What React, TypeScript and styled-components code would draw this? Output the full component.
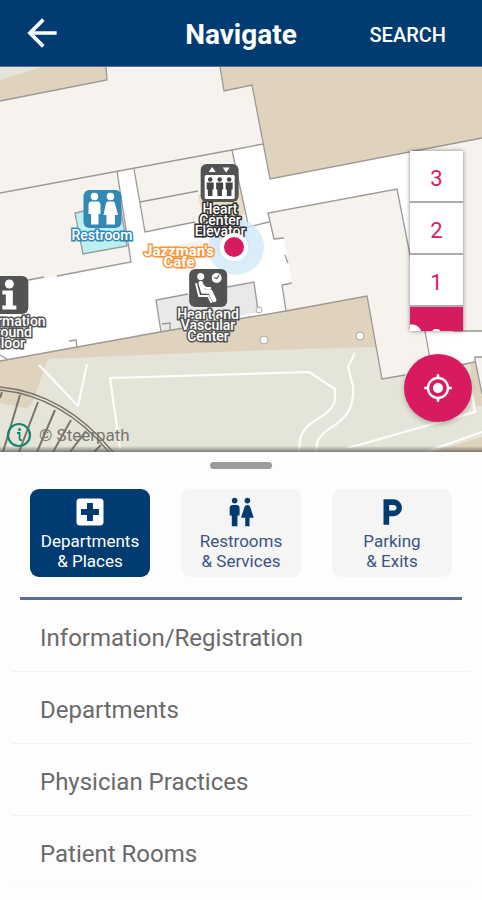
import React from "react";
import styled, { createGlobalStyle } from "styled-components";
import {
  MdArrowBack,
  MdLocalHospital,
  MdLocalParking,
  MdMyLocation,
  MdWc,
} from "react-icons/md";

const color = {
  navy: "#003c71",
  slate: "#5f6c91",
  pink: "#d81b60",
  tan: "#dfd3bd",
  room: "#f6f3ef",
  grass: "#e5e4d8",
  wall: "#9b9896",
  pin: "#535353",
  water: "#3389b5",
};

const GlobalStyle = createGlobalStyle`
  *, *::before, *::after { box-sizing: border-box; }
  body { margin: 0; background: #fdfdfd; font-family: Roboto, "Liberation Sans", sans-serif; }
  button { font: inherit; border: 0; padding: 0; background: none; cursor: pointer; }
`;

const Screen = styled.div`
  display: flex;
  flex-direction: column;
  min-height: 100vh;
  overflow: hidden;
`;

const Header = styled.header`
  display: grid;
  grid-template-columns: 1fr auto 1fr;
  align-items: center;
  height: 67px;
  padding: 0 36px 0 20px;
  background: ${color.navy};
  border-bottom: 1px solid ${color.slate};
  color: #fff;
`;

const BackButton = styled.button`
  display: flex;
  justify-self: start;
  color: #fff;
`;

const Title = styled.h1`
  margin: 0 0 0 16px;
  padding-top: 4px;
  font-size: 28px;
  line-height: 32px;
  font-weight: 700;
`;

const SearchButton = styled.button`
  && {
    justify-self: end;
    padding-top: 4px;
    color: #fff;
    font-size: 20px;
    line-height: 24px;
    font-weight: 500;
  }
`;

const MapArea = styled.section`
  position: relative;
  height: 385px;
  overflow: hidden;
  background: #fff;
`;

const Plan = styled.svg`
  display: block;
  width: 100%;
  height: 100%;
`;

const MapShade = styled.div`
  position: absolute;
  inset: auto 0 0 0;
  height: 6px;
  background: linear-gradient(rgba(90, 88, 80, 0), rgba(90, 88, 80, 0.75));
`;

const Pin = styled.div<{ $x: number; $y: number }>`
  position: absolute;
  left: calc(50% + ${(p) => p.$x}px);
  top: ${(p) => p.$y}px;
  display: flex;
  flex-direction: column;
  align-items: center;
  transform: translateX(-50%);
`;

const PinIcon = styled.svg`
  display: block;
  width: 40px;
  height: 40px;
`;

const PinLabel = styled.span<{ $outline: string; $large?: boolean }>`
  padding-top: 1px;
  color: #fff;
  font-size: ${(p) => (p.$large ? 15 : 14)}px;
  line-height: 11px;
  font-weight: ${(p) => (p.$large ? 700 : 500)};
  text-align: center;
  white-space: pre;
  -webkit-text-stroke: 3px ${(p) => p.$outline};
  paint-order: stroke fill;
`;

const Attribution = styled.div`
  position: absolute;
  left: 6px;
  bottom: 4px;
  display: flex;
  align-items: center;
  gap: 7px;
  color: #77766f;
  font-size: 17px;
  line-height: 26px;
`;

const InfoButton = styled.button`
  display: flex;
`;

const Floors = styled.div`
  position: absolute;
  top: 84px;
  right: 19px;
  width: 53px;
  height: 180px;
  overflow: hidden;
  background: #fff;
  box-shadow: 0 0 4px rgba(0, 0, 0, 0.5);
`;

const FloorButton = styled.button<{ $active?: boolean }>`
  && {
    display: block;
    width: 100%;
    height: 52px;
    border-bottom: 2px solid #aaa;
    padding-top: ${(p) => (p.$active ? 12 : 6)}px;
    background: ${(p) =>
      p.$active
        ? `radial-gradient(circle at 2px 27px, #fff 9px, ${color.pink} 10px)`
        : "#fff"};
    color: ${(p) => (p.$active ? "#fff" : color.pink)};
    font-size: 22px;
    line-height: 24px;
  }
`;

const LocateButton = styled.button`
  && {
    position: absolute;
    right: 10px;
    bottom: 30px;
    display: flex;
    align-items: center;
    justify-content: center;
    width: 68px;
    height: 68px;
    border-radius: 50%;
    background: ${color.pink};
    box-shadow: 0 2px 5px rgba(0, 0, 0, 0.25);
    color: #fff;
    font-size: 30px;
  }
`;

const Sheet = styled.main`
  display: flex;
  flex: 1;
  flex-direction: column;
  padding-top: 10px;
`;

const Handle = styled.div`
  align-self: center;
  width: 62px;
  height: 7px;
  border-radius: 4px;
  background: #9b9b9b;
`;

const Tabs = styled.div`
  display: grid;
  grid-template-columns: repeat(3, 1fr);
  gap: 31px;
  padding: 20px 30px;
`;

const Tab = styled.button<{ $active?: boolean }>`
  && {
    display: flex;
    flex-direction: column;
    align-items: center;
    height: 88px;
    padding-top: 5px;
    border-radius: 9px;
    background: ${(p) => (p.$active ? color.navy : "#f5f5f5")};
    color: ${(p) => (p.$active ? "#fff" : "#3b5484")};
    font-size: 17px;
    line-height: 20px;
    white-space: pre;
  }
`;

const TabIcon = styled.span<{ $active?: boolean }>`
  display: flex;
  align-items: center;
  height: 36px;
  margin-bottom: 1px;
  color: ${(p) => (p.$active ? "#fff" : color.navy)};
`;

const Rule = styled.hr`
  align-self: stretch;
  height: 3px;
  margin: 0 20px;
  border: 0;
  background: ${color.slate};
`;

const List = styled.ul`
  margin: 0;
  padding: 0 12px;
  list-style: none;
`;

const Row = styled.li`
  border-bottom: 1px solid #f2f2f2;

  &:last-child {
    border-color: #f9f9f9;
  }
`;

const RowButton = styled.button`
  && {
    width: 100%;
    height: 71px;
    padding: 4px 28px 0;
    color: #6a6a6a;
    font-size: 24px;
    line-height: 28px;
    text-align: left;
  }
`;

const FloorPlan = () => (
  <Plan viewBox="0 67 482 385" preserveAspectRatio="xMidYMid slice" aria-hidden="true">
    <rect x="0" y="67" width="482" height="385" fill="#fff" />
    <path d="M0 67H224V91L252 85L263 144L232 150L0 193Z" fill={color.room} />
    <path d="M0 193L117 171L131 262L0 287Z" fill={color.room} />
    <path d="M0 60H106L107 80L0 101Z" fill={color.tan} />
    <path d="M0 60H64L0 80Z" fill={color.grass} />
    <path d="M219 60H482V138L270 179L252 85L224 91Z" fill={color.tan} />
    <path d="M134 169L232 151L246 210L195 222L145 232Z" fill={color.room} />
    <path d="M198 195L240 187L245 215L204 223Z" fill="#e9dcc3" />
    <path d="M204 223L245 216L250 250L218 254Z" fill="#ecebea" />
    <path d="M160 248L202 240L206 256L165 260Z" fill={color.room} />
    <path d="M75 213L120 204L127 246L83 254Z" fill="#bceff0" />
    <path
      d="M268 213L397 189L410 256V174L416 151L482 138V331H425L430 368L405 375L382 379L367 296L286 311L282 285L292 283L284 238L274 239Z"
      fill={color.room}
    />
    <path d="M0 361L160 332L286 311L367 296L382 379L462 364L482 360V452H0Z" fill={color.grass} />
    <path d="M0 361L160 332L286 311L367 296L376 347L240 351L48 359L35 395Q32 408 25 408L0 403Z" fill={color.tan} />
    <path d="M425 331H482V357H475V362L430 368Z" fill="#fff" />
    <path d="M470 364L475 361L482 394V406H476Z" fill={color.tan} />
    <path d="M475 357H482V392Z" fill={color.room} />
    <path d="M432 452L482 437V452Z" fill={color.tan} />
    <path d="M156 300L254 282L259 312L161 332Z" fill="#e9e9e9" />

    <g fill="none" stroke={color.wall} strokeWidth="1.3">
      <path d="M106 67L107 80L0 101M220 67L224 91L252 85L270 179L482 138M263 144L232 150L0 193" />
      <path d="M117 171L131 262L57 276M44 277L28 280M134 169L145 232L195 222M140 202L198 191M232 150L248 224" />
      <path d="M120 204L127 246L83 254L75 213L84 211M240 229L269 222" />
      <path d="M284 238L274 239L268 213L397 189L411 260M285 255L288 263M292 283L282 285L286 311" />
      <path d="M0 361L160 332L286 311L367 296L382 379L405 375M425 331L430 359M453 331H482M460 365L475 362V357H482M475 360L482 394" />
      <path d="M161 332L156 300L188 294M227 287L254 282L258 311M69 341L76 340L77 348M162 324L170 323V330M0 355L7 359" />
    </g>

    <g fill="none" stroke="#fdfdfb" strokeWidth="2.2" strokeLinejoin="round">
      <path d="M39 365L78 406L87 364M120 449L110 378L309 372L335 389V400C330 420 304 418 300 440L299 452" />
      <path d="M355 353L348 367L353 386C356 427 322 424 317 443L316 452M348 448L475 412L472 394M425 452L482 432" />
    </g>

    <g fill="#f7f7f5" stroke="#b0aba0">
      <circle cx="264" cy="340" r="4" />
      <circle cx="360" cy="336" r="4" />
      <circle cx="259" cy="310" r="3" />
    </g>

    <g fill="none" stroke="#77746e" strokeWidth="1.3">
      <path d="M0 387Q64 393 113 452M0 390Q62 396 109 452" />
      <path
        d="M0 398L2 392M20 395L3 452M38 402L19 452M55 410L37 452M71 420L53 452M86 431L70 452M101 445L94 452"
        strokeWidth="2"
      />
    </g>

    <circle cx="236" cy="247" r="28" fill="#cfeaf6" fillOpacity="0.8" />
  </Plan>
);

const Position = styled.div`
  position: absolute;
  left: calc(50% - 21px);
  top: 166px;
  width: 28px;
  height: 28px;
  border: 4px solid #fff;
  border-radius: 50%;
  background: ${color.pink};
`;

const RestroomPin = () => (
  <PinIcon viewBox="0 0 40 40">
    <rect x="1" y="1" width="38" height="38" rx="6" fill={color.water} />
    <g fill="#fff">
      <circle cx="12" cy="7.500" r="3.800" />
      <path d="M9 12.500H15Q18 12.500 18 16V25H16V35.500H8.500V25H6V16Q6 12.500 9 12.500Z" />
      <circle cx="28" cy="7.500" r="3.800" />
      <path d="M25.500 12.500H30.500Q32 12.500 32.500 14.500L35.500 26H32.500V35.500H24V26H21L23.500 14.500Q24 12.500 25.500 12.500Z" />
    </g>
  </PinIcon>
);

const rider = (x: number) => (
  <g key={x} transform={`translate(${x} 0)`}>
    <circle cx="0" cy="16.500" r="2.300" />
    <path d="M-3.500 19.500H3.500V26.500H2.300V33H-2.300V26.500H-3.500Z" />
  </g>
);

const ElevatorPin = () => (
  <PinIcon viewBox="0 0 40 40">
    <rect x="1" y="1" width="38" height="38" rx="6" fill={color.pin} />
    <path d="M9 9L12.500 4L16 9ZM23 4.500H30L26.500 9.500Z" fill="#fff" />
    <rect x="5" y="12" width="30" height="24" rx="1.500" fill="#fff" />
    <g fill="#444">{[10.5, 20, 29.5].map(rider)}</g>
  </PinIcon>
);

const WaitingPin = () => (
  <PinIcon viewBox="0 0 40 40">
    <rect x="1" y="1" width="38" height="38" rx="6" fill={color.pin} />
    <circle cx="12.500" cy="8.500" r="3.500" fill="#fff" />
    <path d="M12.500 15L15 23.500H22L26 32" fill="none" stroke="#fff" strokeWidth="4.500" strokeLinecap="round" strokeLinejoin="round" />
    <path d="M8 16L11 28H20L23 34M14 17L18 20H22" fill="none" stroke="#fff" strokeWidth="2" strokeLinecap="round" />
    <circle cx="28.500" cy="10" r="5" fill="#fff" />
    <path d="M31 7L28.500 10.500L26 9.500" fill="none" stroke={color.pin} strokeWidth="1.200" />
  </PinIcon>
);

const InformationPin = () => (
  <PinIcon viewBox="0 0 40 40">
    <rect x="1" y="1" width="38" height="38" rx="6" fill={color.pin} />
    <circle cx="20" cy="9" r="4.500" fill="#fff" />
    <path d="M13 15.500H23.500V30.500H27V34.500H13V30.500H16.500V19.500H13Z" fill="#fff" />
  </PinIcon>
);

const tabs = [
  { label: "Departments\n& Places", icon: <MdLocalHospital size={36} />, active: true },
  { label: "Restrooms\n& Services", icon: <MdWc size={34} /> },
  { label: "Parking\n& Exits", icon: <MdLocalParking size={34} /> },
];

const places = [
  "Information/Registration",
  "Departments",
  "Physician Practices",
  "Patient Rooms",
];

export default function App() {
  return (
    <Screen>
      <GlobalStyle />
      <Header>
        <BackButton aria-label="Back">
          <MdArrowBack size={44} />
        </BackButton>
        <Title>Navigate</Title>
        <SearchButton>SEARCH</SearchButton>
      </Header>

      <MapArea aria-label="Floor map">
        <FloorPlan />
        <Pin $x={-139} $y={122}>
          <RestroomPin />
          <PinLabel $outline={color.water}>Restroom</PinLabel>
        </Pin>
        <Pin $x={-21} $y={96}>
          <ElevatorPin />
          <PinLabel $outline="#2e2e2e">{"Heart\nCenter\nElevator"}</PinLabel>
        </Pin>
        <Pin $x={-62} $y={178}>
          <PinLabel $outline="#f5963c" $large>{"Jazzman's\nCafe"}</PinLabel>
        </Pin>
        <Pin $x={-33} $y={201}>
          <WaitingPin />
          <PinLabel $outline={color.pin}>{"Heart and\nVascular\nCenter"}</PinLabel>
        </Pin>
        <Pin $x={-232} $y={208}>
          <InformationPin />
          <PinLabel $outline={color.pin}>{"Information\nGround\nFloor"}</PinLabel>
        </Pin>
        <Position />
        <MapShade />
        <Attribution>
          <InfoButton aria-label="Map information">
            <svg width="26" height="26" viewBox="0 0 26 26">
              <circle cx="13" cy="13" r="11" fill="none" stroke="#16866f" strokeWidth="2.200" />
              <circle cx="13.500" cy="7.500" r="1.500" fill="#16866f" />
              <path d="M11 11H13.500V16.500Q13.500 18.500 16 18" fill="none" stroke="#16866f" strokeWidth="1.800" />
            </svg>
          </InfoButton>
          <span>© Steerpath</span>
        </Attribution>
        <Floors>
          <FloorButton>3</FloorButton>
          <FloorButton>2</FloorButton>
          <FloorButton>1</FloorButton>
          <FloorButton $active>0</FloorButton>
        </Floors>
        <LocateButton aria-label="Show my location">
          <MdMyLocation />
        </LocateButton>
      </MapArea>

      <Sheet>
        <Handle />
        <Tabs>
          {tabs.map((t) => (
            <Tab key={t.label} $active={t.active} aria-pressed={!!t.active}>
              <TabIcon $active={t.active}>{t.icon}</TabIcon>
              <span>{t.label}</span>
            </Tab>
          ))}
        </Tabs>
        <Rule />
        <List>
          {places.map((name) => (
            <Row key={name}>
              <RowButton>{name}</RowButton>
            </Row>
          ))}
        </List>
      </Sheet>
    </Screen>
  );
}
